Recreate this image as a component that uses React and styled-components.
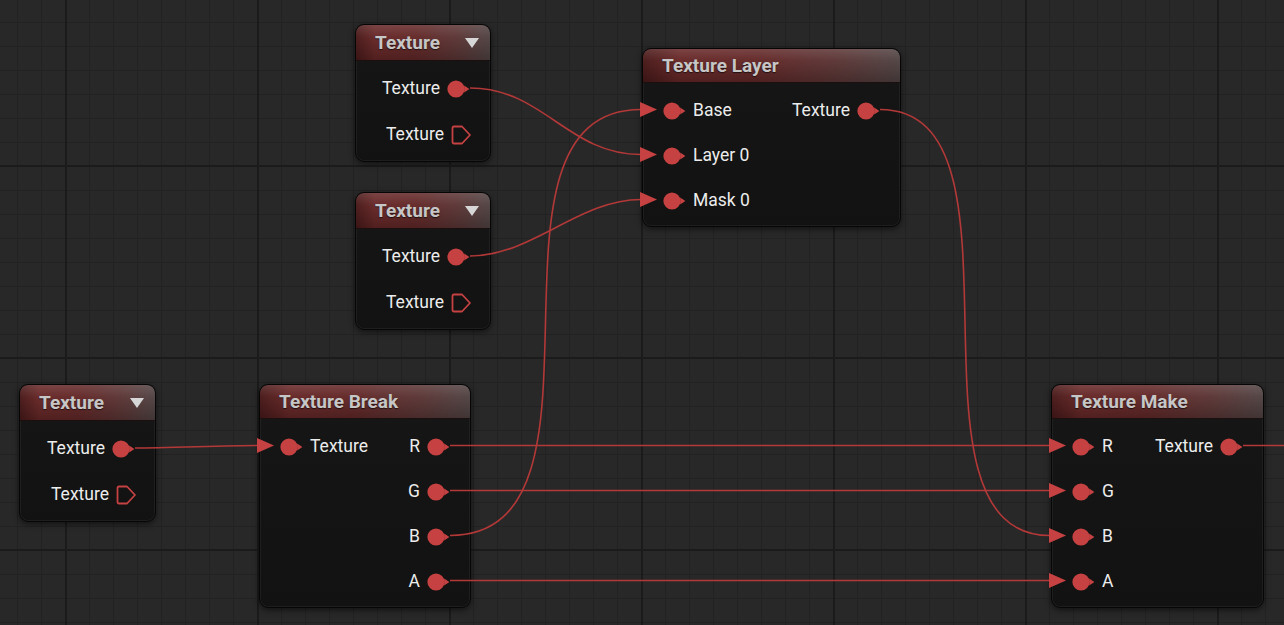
import React from 'react'
import styled, { createGlobalStyle } from 'styled-components'

const PIN = '#c64242'
const WIRE = '#b33838'

const GlobalStyle = createGlobalStyle`
	html, body {
		margin: 0;
		padding: 0;
		background: #282828;
		overflow: hidden;
	}
	body {
		font-family: Roboto, 'Noto Sans', 'Liberation Sans', sans-serif;
	}
`

// texture sources are taller rows with a dropdown in the header
const SOURCE = { headH: 35, rowH: 46 }
const OP = { headH: 33, rowH: 45 }

const nodes = [
	{
		id: 'tex1',
		title: 'Texture',
		dropdown: true,
		x: 355,
		y: 24,
		w: 136,
		...SOURCE,
		rows: [{ out: 'Texture' }, { out: 'Texture', exec: true }]
	},
	{
		id: 'tex2',
		title: 'Texture',
		dropdown: true,
		x: 355,
		y: 192,
		w: 136,
		...SOURCE,
		rows: [{ out: 'Texture' }, { out: 'Texture', exec: true }]
	},
	{
		id: 'tex3',
		title: 'Texture',
		dropdown: true,
		x: 19,
		y: 384,
		w: 137,
		...SOURCE,
		rows: [{ out: 'Texture' }, { out: 'Texture', exec: true }]
	},
	{
		id: 'layer',
		title: 'Texture Layer',
		x: 642,
		y: 48,
		w: 259,
		...OP,
		rows: [{ in: 'Base', out: 'Texture' }, { in: 'Layer 0' }, { in: 'Mask 0' }]
	},
	{
		id: 'break',
		title: 'Texture Break',
		x: 259,
		y: 384,
		w: 212,
		...OP,
		rows: [{ in: 'Texture', out: 'R' }, { out: 'G' }, { out: 'B' }, { out: 'A' }]
	},
	{
		id: 'make',
		title: 'Texture Make',
		x: 1051,
		y: 384,
		w: 213,
		...OP,
		rows: [{ in: 'R', out: 'Texture' }, { in: 'G' }, { in: 'B' }, { in: 'A' }]
	}
]

const byId = Object.fromEntries(nodes.map(n => [n.id, n]))

const links = [
	['tex1', 0, 'layer', 1],
	['tex2', 0, 'layer', 2],
	['break', 2, 'layer', 0],
	['layer', 0, 'make', 2],
	['tex3', 0, 'break', 0],
	['break', 0, 'make', 0],
	['break', 1, 'make', 1],
	['break', 3, 'make', 3],
	['make', 0, null, 0]
]

const rowY = (n, i) => n.y + 1 + n.headH + 5 + n.rowH * (i + 0.5)
const outPos = (n, i) => ({ x: n.x + n.w - 21, y: rowY(n, i) })
const inPos = (n, i) => ({ x: n.x - 1, y: rowY(n, i) })

// tangent grows with the vertical drop, capped by the horizontal span
const curve = (a, b) => {
	const dx = Math.abs(b.x - a.x)
	const dy = Math.abs(b.y - a.y)
	const d = Math.max(Math.min(dx * 0.95, dy * 1.1), 30)
	return `M${a.x} ${a.y} C${a.x + d} ${a.y}, ${b.x - d} ${b.y}, ${b.x} ${b.y}`
}

const DataPin = () => (
	<PinIcon width="23" height="18" viewBox="0 0 23 18">
		<circle cx="9" cy="9" r="8.6" fill={PIN} />
		<polygon points="17.2,5.4 22.4,9 17.2,12.6" fill={PIN} />
	</PinIcon>
)

const ExecPin = () => (
	<PinIcon width="21" height="20" viewBox="0 0 21 20">
		<path
			d="M3 1.5 H11 L19 10 L11 18.5 H3 Q1.5 18.5 1.5 17 V3 Q1.5 1.5 3 1.5 Z"
			fill="none"
			stroke={PIN}
			strokeWidth="1.8"
			strokeLinejoin="round"
		/>
	</PinIcon>
)

const GraphNode = ({ node }) => (
	<NodeBox style={{ left: node.x, top: node.y, width: node.w }}>
		<Header $h={node.headH}>
			<Title>{node.title}</Title>
			{node.dropdown && <Caret />}
		</Header>
		<Body>
			{node.rows.map((r, i) => (
				<Row key={i} $h={node.rowH}>
					<InSide>
						{r.in && (
							<>
								<DataPin />
								<Label>{r.in}</Label>
							</>
						)}
					</InSide>
					<OutSide $exec={r.exec}>
						{r.out && (
							<>
								<Label>{r.out}</Label>
								{r.exec ? <ExecPin /> : <DataPin />}
							</>
						)}
					</OutSide>
				</Row>
			))}
		</Body>
	</NodeBox>
)

const App = () => {
	const wires = links.map(([from, fi, to, ti]) => {
		const a = outPos(byId[from], fi)
		const b = to ? inPos(byId[to], ti) : { x: 1300, y: a.y }
		return { a, b, arrow: !!to }
	})
	return (
		<>
			<GlobalStyle />
			<Canvas>
				{nodes.map(n => (
					<GraphNode key={n.id} node={n} />
				))}
				<Wires width="1284" height="625" viewBox="0 0 1284 625">
					{wires.map((w, i) => (
						<g key={i}>
							<path d={curve(w.a, w.b)} fill="none" stroke={WIRE} strokeWidth="1.6" />
							{w.arrow && (
								<polygon
									points={`${w.b.x - 1},${w.b.y - 7.5} ${w.b.x + 16},${w.b.y} ${w.b.x - 1},${w.b.y + 7.5}`}
									fill={PIN}
								/>
							)}
						</g>
					))}
				</Wires>
			</Canvas>
		</>
	)
}

export default App

const Canvas = styled.div`
	position: relative;
	width: 100%;
	height: 100vh;
	overflow: hidden;
	background-color: #282828;
	background-image: linear-gradient(to right, #1b1b1b 2px, transparent 2px),
		linear-gradient(to bottom, #1b1b1b 2px, transparent 2px),
		linear-gradient(to right, #222222 1px, transparent 1px),
		linear-gradient(to bottom, #222222 1px, transparent 1px);
	background-size: 192px 100%, 100% 192px, 24px 100%, 100% 24px;
	background-position: 65px 0, 0 165px, 17px 0, 0 22px;
`

const Wires = styled.svg`
	position: absolute;
	left: 0;
	top: 0;
	pointer-events: none;
`

const NodeBox = styled.div`
	position: absolute;
	box-sizing: border-box;
	border: 1px solid #060606;
	border-radius: 9px;
	background: linear-gradient(180deg, #151615 0%, #111211 100%);
	box-shadow: inset 0 0 0 1px rgba(255, 255, 255, 0.05), 0 2px 6px rgba(0, 0, 0, 0.55);
	overflow: hidden;
`

const Header = styled.div`
	height: ${props => props.$h}px;
	display: flex;
	align-items: center;
	justify-content: space-between;
	padding: 0 11px 0 19px;
	border-radius: 8px 8px 0 0;
	background: linear-gradient(
			180deg,
			rgba(255, 255, 255, 0.13) 0%,
			rgba(255, 255, 255, 0.02) 35%,
			rgba(0, 0, 0, 0.22) 100%
		),
		linear-gradient(90deg, #4a1a1a 0%, #682828 14%, #642929 45%, #5c3838 78%, #524444 100%);
	border-bottom: 1px solid #1c0f0f;
`

const Title = styled.span`
	font-size: 19px;
	font-weight: 700;
	color: #c6c6c6;
	text-shadow: 0 1px 1px rgba(0, 0, 0, 0.6);
`

const Caret = styled.span`
	width: 0;
	height: 0;
	border-left: 7.5px solid transparent;
	border-right: 7.5px solid transparent;
	border-top: 10px solid #d6d6d6;
`

const Body = styled.div`
	padding: 5px 0 3px;
`

const Row = styled.div`
	height: ${props => props.$h}px;
	display: flex;
	align-items: center;
`

const InSide = styled.div`
	display: flex;
	align-items: center;
	gap: 7px;
	padding-left: 20px;
`

const OutSide = styled.div`
	display: flex;
	align-items: center;
	gap: 7px;
	margin-left: auto;
	padding-right: ${props => (props.$exec ? 18 : 20)}px;
`

const Label = styled.span`
	font-size: 17.5px;
	color: #ececec;
	line-height: 1;
`

const PinIcon = styled.svg`
	display: block;
	flex: none;
`
